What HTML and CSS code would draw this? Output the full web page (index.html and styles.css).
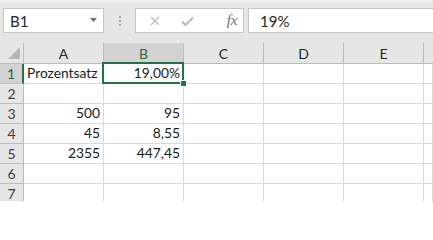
FILE: index.html
```html
<!DOCTYPE html>
<html>
<head>
<meta charset="utf-8">
<link rel="stylesheet" href="styles.css">
</head>
<body>
<div class="app">
  <div class="toolbar">
    <div class="namebox">
      <span class="name">B1</span>
      <svg class="caret" width="7" height="4" viewBox="0 0 7 4"><path d="M0 0H7L3.5 4Z" fill="#6d6d6d"/></svg>
    </div>
    <div class="grip">
      <span class="dot"></span><span class="dot"></span><span class="dot"></span>
    </div>
    <div class="fbtns">
      <span class="fbtn fb-x"><svg width="10" height="10" viewBox="0 0 10 10"><path d="M1 1L9 9M9 1L1 9" stroke="#bcbcbc" stroke-width="1.4" fill="none"/></svg></span>
      <span class="fbtn fb-ok"><svg width="13" height="10" viewBox="0 0 13 10"><path d="M1 5.5L4.5 9L12 1.5" stroke="#bcbcbc" stroke-width="2.2" fill="none"/></svg></span>
      <span class="fbtn fb-fx">fx</span>
    </div>
    <div class="formula">19%</div>
  </div>
  <div class="sheet">
    <div class="corner"><svg width="12" height="12" viewBox="0 0 12 12"><path d="M12 0V12H0Z" fill="#b7b7b7"/></svg></div>
    <div class="ch">A</div>
    <div class="ch ch-sel">B</div>
    <div class="ch">C</div>
    <div class="ch">D</div>
    <div class="ch">E</div>
    <div class="ch ch-rest"></div>

    <div class="rh rh-sel">1</div>
    <div class="c">Prozentsatz</div>
    <div class="c num sel">19,00%<span class="handle"></span></div>
    <div class="c"></div><div class="c"></div><div class="c"></div><div class="c"></div>

    <div class="rh">2</div>
    <div class="c"></div><div class="c"></div><div class="c"></div><div class="c"></div><div class="c"></div><div class="c"></div>

    <div class="rh">3</div>
    <div class="c num">500</div><div class="c num">95</div><div class="c"></div><div class="c"></div><div class="c"></div><div class="c"></div>

    <div class="rh">4</div>
    <div class="c num">45</div><div class="c num">8,55</div><div class="c"></div><div class="c"></div><div class="c"></div><div class="c"></div>

    <div class="rh">5</div>
    <div class="c num">2355</div><div class="c num">447,45</div><div class="c"></div><div class="c"></div><div class="c"></div><div class="c"></div>

    <div class="rh">6</div>
    <div class="c"></div><div class="c"></div><div class="c"></div><div class="c"></div><div class="c"></div><div class="c"></div>

    <div class="rh">7</div>
    <div class="c"></div><div class="c"></div><div class="c"></div><div class="c"></div><div class="c"></div><div class="c"></div>
  </div>
</div>
</body>
</html>
```

FILE: styles.css
```css
* { box-sizing: border-box; }
html, body { margin: 0; padding: 0; background: #fff; }
body { width: 433px; height: 201px; overflow: hidden; font-family: Lato, "Liberation Sans", sans-serif; }

.app { width: 433px; height: 201px; overflow: hidden; }

.toolbar {
  height: 43px;
  display: flex;
  align-items: flex-start;
  padding: 8px 0 0 3px;
  background: linear-gradient(#efefef 0, #efefef 2px, #e6e6e6 3px);
}

.namebox {
  width: 101px;
  height: 25px;
  background: #fff;
  border: 1px solid #c6c6c6;
  display: flex;
  align-items: center;
  justify-content: space-between;
  padding: 0 6px 0 6px;
}
.name { font-size: 15px; color: #262626; }
.caret { margin-top: -1px; }

.grip {
  width: 31px;
  height: 25px;
  display: flex;
  flex-direction: column;
  align-items: center;
  justify-content: center;
  gap: 2px;
}
.dot { width: 2px; height: 2px; background: #a6a6a6; }

.fbtns {
  width: 109px;
  height: 25px;
  background: #fff;
  border: 1px solid #c6c6c6;
  display: flex;
  align-items: center;
}
.fbtn { display: flex; align-items: center; justify-content: center; height: 100%; }
.fb-x { width: 38px; }
.fb-ok { width: 28px; }
.fb-fx {
  width: 22px;
  margin-left: 20px;
  font-family: "Liberation Serif", serif;
  font-style: italic;
  font-size: 15px;
  color: #6e6e6e;
  padding-bottom: 1px;
}

.formula {
  flex: 1;
  margin-left: 4px;
  margin-right: -10px;
  height: 25px;
  background: #fff;
  border: 1px solid #c6c6c6;
  display: flex;
  align-items: center;
  padding-left: 11px;
  font-size: 15px;
  color: #262626;
}

.sheet {
  display: grid;
  grid-template-columns: 24px repeat(5, 80px) 1fr;
  grid-template-rows: 21px;
  grid-auto-rows: 20px;
}

.corner {
  background: #e6e6e6;
  border-right: 1px solid #bdbdbd;
  border-bottom: 1px solid #bdbdbd;
  display: flex;
  align-items: flex-end;
  justify-content: flex-end;
  padding: 0 3px 4px 0;
}

.ch {
  background: #e6e6e6;
  border-right: 1px solid #bdbdbd;
  border-bottom: 1px solid #bdbdbd;
  display: flex;
  align-items: center;
  justify-content: center;
  font-size: 14px;
  color: #262626;
  padding-top: 1px;
}
.ch-sel { background: #d2d2d2; color: #1e6b3f; border-bottom: 2px solid #217346; }
.ch-rest { border-right: none; }

.rh {
  background: #e6e6e6;
  border-right: 1px solid #bdbdbd;
  border-bottom: 1px solid #bdbdbd;
  display: flex;
  align-items: center;
  justify-content: center;
  font-size: 14px;
  color: #404040;
}
.rh-sel { background: #d2d2d2; color: #1e6b3f; border-right: 2px solid #217346; }

.c {
  border-right: 1px solid #d9d9d9;
  border-bottom: 1px solid #d9d9d9;
  display: flex;
  align-items: flex-end;
  padding: 0 3px 1px 3px;
  font-size: 13.8px;
  color: #1a1a1a;
  line-height: 18px;
  white-space: nowrap;
}
.num { justify-content: flex-end; }

.sel { position: relative; }
.sel::after {
  content: "";
  position: absolute;
  left: -2px;
  top: -2px;
  right: -1px;
  bottom: -1px;
  border: 2px solid #217346;
  z-index: 2;
}
.handle {
  position: absolute;
  right: -4px;
  bottom: -4px;
  width: 7px;
  height: 7px;
  background: #217346;
  border: 1px solid #fff;
  z-index: 3;
}
```
